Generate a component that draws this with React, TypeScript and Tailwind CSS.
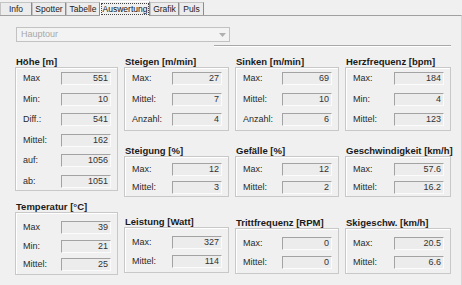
import React from "react";

type Row = [string, string];

function Field({ v }: { v: string }) {
  return (
    <div className="w-[50px] h-[13px] bg-[#ececec] border border-t-[#a3a3a3] border-l-[#a3a3a3] border-b-[#fbfbfb] border-r-[#fbfbfb] text-right pr-[2px] leading-[11px] text-[#333]">
      {v}
    </div>
  );
}

function Group({
  title,
  rows,
  top,
  boxCls,
  listCls,
}: {
  title: string;
  rows: Row[];
  top: string;
  boxCls: string;
  listCls: string;
}) {
  return (
    <div className={top}>
      <div className="h-[11px] leading-[11px] font-bold text-[9.5px] text-[#1a1a1a] pl-[1px] whitespace-nowrap">
        {title}
      </div>
      <div className={"border border-[#c8c8c8] shadow-[inset_1px_1px_0_#ffffff] " + boxCls}>
        <div className={"flex flex-col " + listCls}>
          {rows.map(([l, v]) => (
            <div key={l} className="flex items-center justify-between pl-[7px] pr-[6px]">
              <span className="text-[#2a2a2a]">{l}</span>
              <Field v={v} />
            </div>
          ))}
        </div>
      </div>
    </div>
  );
}

const tabs: { t: string; w: string; sel?: boolean }[] = [
  { t: "Info", w: "w-[32px]" },
  { t: "Spotter", w: "w-[34px]" },
  { t: "Tabelle", w: "w-[34px]" },
  { t: "Auswertung", w: "w-[50px]", sel: true },
  { t: "Grafik", w: "w-[29px]" },
  { t: "Puls", w: "w-[25px]" },
];

export default function App() {
  return (
    <div
      className="w-[462px] h-[285px] bg-[#f0f0f0] overflow-hidden text-[9px] text-[#222]"
      style={{ fontFamily: '"Liberation Sans", Arial, sans-serif' }}
    >
      {/* tabs */}
      <div className="flex items-end h-[15px] relative z-10 text-[8.5px]">
        {tabs.map((tab) =>
          tab.sel ? (
            <div
              key={tab.t}
              className={
                tab.w +
                " h-[15px] mb-[-1px] bg-[#f0f0f0] border-t border-l border-r border-t-[#ffffff] border-l-[#ffffff] border-r-[#8c8c8c] flex items-start justify-center pt-[1px]"
              }
            >
              <span className="border border-dotted border-[#444] px-[1px] leading-[10px] text-[#111] whitespace-nowrap">
                {tab.t}
              </span>
            </div>
          ) : (
            <div
              key={tab.t}
              className={
                tab.w +
                " h-[13px] bg-[#ececec] border-t border-l border-r border-t-[#c4c4c4] border-l-[#c4c4c4] border-r-[#8c8c8c] flex items-center justify-center leading-[11px] text-[#222] whitespace-nowrap"
              }
            >
              {tab.t}
            </div>
          )
        )}
      </div>
      {/* panel */}
      <div className="h-[270px] border-t border-[#a0a0a0] border-r border-r-[#d8d8d8]">
        <div className="pt-[11px] pl-[16px]">
          <div className="w-[214px] h-[15px] border border-[#c2c2c2] bg-[#f3f3f3] flex items-center justify-between pl-[4px] pr-[3px]">
            <span className="text-[#a8a8a8]">Hauptour</span>
            <svg width="7" height="4" viewBox="0 0 7 4">
              <path d="M0 0 L7 0 L3.5 4 Z" fill="#b0b0b0" />
            </svg>
          </div>
        </div>
        <div className="mt-[3px] ml-[214px] mr-[10px] h-[1px] bg-[#a8a8a8] shadow-[0_1px_0_#ffffff]" />
        <div className="flex pl-[15px] gap-x-[6px] mt-[10px]">
          <div className="w-[103px] flex flex-col">
            <Group
              title="Höhe [m]"
              top="mt-0"
              boxCls="h-[124px]"
              listCls="pt-[4px] gap-[7px]"
              rows={[
                ["Max", "551"],
                ["Min:", "10"],
                ["Diff.:", "541"],
                ["Mittel:", "162"],
                ["auf:", "1056"],
                ["ab:", "1051"],
              ]}
            />
            <Group
              title="Temperatur [°C]"
              top="mt-[10px]"
              boxCls="h-[63px]"
              listCls="pt-[8px] gap-[5px]"
              rows={[
                ["Max", "39"],
                ["Min:", "21"],
                ["Mittel:", "25"],
              ]}
            />
          </div>
          <div className="w-[105px] flex flex-col">
            <Group
              title="Steigen [m/min]"
              top="mt-0"
              boxCls="h-[64px]"
              listCls="pt-[4px] gap-[7px]"
              rows={[
                ["Max:", "27"],
                ["Mittel:", "7"],
                ["Anzahl:", "4"],
              ]}
            />
            <Group
              title="Steigung [%]"
              top="mt-[14px]"
              boxCls="h-[41px]"
              listCls="pt-[6px] gap-[4px]"
              rows={[
                ["Max:", "12"],
                ["Mittel:", "3"],
              ]}
            />
            <Group
              title="Leistung [Watt]"
              top="mt-[19px]"
              boxCls="h-[46px]"
              listCls="pt-[8px] gap-[5px]"
              rows={[
                ["Max:", "327"],
                ["Mittel:", "114"],
              ]}
            />
          </div>
          <div className="w-[104px] flex flex-col">
            <Group
              title="Sinken [m/min]"
              top="mt-0"
              boxCls="h-[64px]"
              listCls="pt-[4px] gap-[7px]"
              rows={[
                ["Max:", "69"],
                ["Mittel:", "10"],
                ["Anzahl:", "6"],
              ]}
            />
            <Group
              title="Gefälle [%]"
              top="mt-[14px]"
              boxCls="h-[41px]"
              listCls="pt-[6px] gap-[4px]"
              rows={[
                ["Max:", "12"],
                ["Mittel:", "2"],
              ]}
            />
            <Group
              title="Trittfrequenz [RPM]"
              top="mt-[20px]"
              boxCls="h-[46px]"
              listCls="pt-[8px] gap-[5px]"
              rows={[
                ["Max:", "0"],
                ["Mittel:", "0"],
              ]}
            />
          </div>
          <div className="w-[106px] flex flex-col">
            <Group
              title="Herzfrequenz [bpm]"
              top="mt-0"
              boxCls="h-[64px]"
              listCls="pt-[4px] gap-[7px]"
              rows={[
                ["Max:", "184"],
                ["Min:", "4"],
                ["Mittel:", "123"],
              ]}
            />
            <Group
              title="Geschwindigkeit [km/h]"
              top="mt-[14px]"
              boxCls="h-[41px]"
              listCls="pt-[6px] gap-[4px]"
              rows={[
                ["Max:", "57.6"],
                ["Mittel:", "16.2"],
              ]}
            />
            <Group
              title="Skigeschw. [km/h]"
              top="mt-[20px]"
              boxCls="h-[46px]"
              listCls="pt-[8px] gap-[5px]"
              rows={[
                ["Max:", "20.5"],
                ["Mittel:", "6.6"],
              ]}
            />
          </div>
        </div>
      </div>
    </div>
  );
}
